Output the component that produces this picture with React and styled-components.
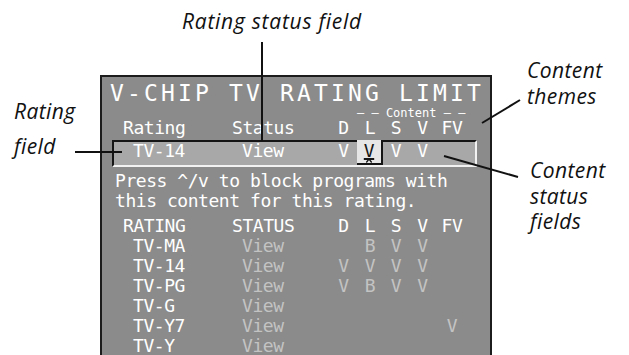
import React from 'react';
import styled, { createGlobalStyle } from 'styled-components';

const GlobalStyle = createGlobalStyle`
  html, body {
    margin: 0;
    padding: 0;
    background: #fff;
  }
  body {
    width: 629px;
    height: 355px;
    overflow: hidden;
  }
`;

const columns = '109px 98px 27px 26px 26px 27px 32px';

const upperRows = [
  { rating: 'TV-14', status: 'View', content: ['V', 'V', 'V', 'V', ''] },
];

const lowerRows = [
  { rating: 'TV-MA', content: ['', 'B', 'V', 'V', ''] },
  { rating: 'TV-14', content: ['V', 'V', 'V', 'V', ''] },
  { rating: 'TV-PG', content: ['V', 'B', 'V', 'V', ''] },
  { rating: 'TV-G', content: ['', '', '', '', ''] },
  { rating: 'TV-Y7', content: ['', '', '', '', 'V'] },
  { rating: 'TV-Y', content: ['', '', '', '', ''] },
];

const themes = ['D', 'L', 'S', 'V', 'FV'];

const App = () => {
  const selected = upperRows[0];
  return (
    <Figure>
      <GlobalStyle />
      <Screen>
        <Title>V-CHIP TV RATING LIMIT</Title>
        <ThemeCaption>
          <span>– – Content – –</span>
        </ThemeCaption>
        <Row>
          <Cell>Rating</Cell>
          <Cell>Status</Cell>
          {themes.map((t) => (
            <Cell key={t} center>
              {t}
            </Cell>
          ))}
        </Row>
        <SelectedRow>
          <Cell indent>{selected.rating}</Cell>
          <Cell indent>{selected.status}</Cell>
          {selected.content.map((c, i) =>
            i === 1 ? (
              <Cursor key={i}>
                <u>{c}</u>
                <Caret viewBox="0 0 7 5" width="7" height="5">
                  <polyline points="0.8,4.5 3.5,1 6.2,4.5" />
                </Caret>
              </Cursor>
            ) : (
              <Cell key={i} center>
                {c}
              </Cell>
            )
          )}
        </SelectedRow>
        <Message>
          Press ^/v to block programs with
          <br />
          this content for this rating.
        </Message>
        <Row $gap={5} $lh={20}>
          <Cell>RATING</Cell>
          <Cell>STATUS</Cell>
          {themes.map((t) => (
            <Cell key={t} center>
              {t}
            </Cell>
          ))}
        </Row>
        {lowerRows.map((r) => (
          <Row key={r.rating} $lh={20}>
            <Cell indent>{r.rating}</Cell>
            <Cell indent dim>
              View
            </Cell>
            {r.content.map((c, i) => (
              <Cell key={i} center dim>
                {c}
              </Cell>
            ))}
          </Row>
        ))}
      </Screen>

      <Callouts viewBox="0 0 629 355" width="629" height="355">
        <line x1="262" y1="42" x2="262" y2="141" />
        <line x1="75" y1="152" x2="122" y2="152" />
        <line x1="482" y1="123" x2="520" y2="100" />
        <line x1="444" y1="156" x2="518" y2="177" />
      </Callouts>

      <Label $ls={0.75} style={{ left: 182, top: 9 }}>
        Rating status field
      </Label>
      <Label $lh={35} style={{ left: 14, top: 94 }}>
        Rating
        <br />
        field
      </Label>
      <Label style={{ left: 527, top: 58 }}>
        Content
        <br />
        themes
      </Label>
      <Label style={{ left: 530, top: 158 }}>
        Content
        <br />
        status
        <br />
        fields
      </Label>
    </Figure>
  );
};

export default App;

const Figure = styled.div`
  position: relative;
  width: 629px;
  height: 355px;
  overflow: hidden;
  box-sizing: border-box;
  padding: 75px 0 0 100px;
`;

const Screen = styled.div`
  width: 392px;
  height: 300px;
  box-sizing: border-box;
  border: 2px solid #1c1c1c;
  background: #8b8b8b;
  padding: 0 13px 0 10px;
  font-family: 'DejaVu Sans Mono', monospace;
  font-size: 18px;
  letter-spacing: -0.45px;
  color: #fff;
`;

const Title = styled.div`
  margin-left: -2px;
  padding-top: 2px;
  font-size: 23px;
  line-height: 28px;
  letter-spacing: 3.15px;
  white-space: pre;
`;

const Row = styled.div`
  display: grid;
  grid-template-columns: ${columns};
  padding-left: 11px;
  margin-top: ${(p) => p.$gap || 0}px;
  line-height: ${(p) => p.$lh || 18}px;
  white-space: pre;
`;

const ThemeCaption = styled(Row)`
  font-size: 12px;
  line-height: 12px;
  letter-spacing: 0;

  span {
    grid-column: 4 / span 4;
  }
`;

const SelectedRow = styled(Row)`
  margin-top: 3px;
  padding-left: 9px;
  background: #a8a8a8;
  border-top: 2px solid #151515;
  border-left: 2px solid #151515;
  border-bottom: 2px solid #f2f2f2;
  border-right: 2px solid #f2f2f2;

  & > * {
    padding-bottom: 5px;
  }
`;

const Cell = styled.span`
  padding-left: ${(p) => (p.indent ? 10 : 0)}px;
  text-align: ${(p) => (p.center ? 'center' : 'left')};
  color: ${(p) => (p.dim ? '#c3c3c3' : '#fff')};
`;

const Cursor = styled.span`
  position: relative;
  margin-top: -2px;
  padding-top: 2px;
  box-sizing: border-box;
  text-align: center;
  background: #e6e6e6;
  color: #161616;
  border-right: 2px solid #151515;
  border-bottom: 2px solid #151515;
  padding-bottom: 3px !important;

  u {
    text-decoration-thickness: 1.5px;
    text-underline-offset: 1px;
  }
`;

const Caret = styled.svg`
  position: absolute;
  left: 50%;
  bottom: 0;
  transform: translateX(-50%);

  polyline {
    fill: none;
    stroke: #161616;
    stroke-width: 1.3;
  }
`;

const Message = styled.div`
  margin-top: 4px;
  padding-left: 3px;
  line-height: 20px;
  white-space: pre;
`;

const Callouts = styled.svg`
  position: absolute;
  left: 0;
  top: 0;
  pointer-events: none;

  line {
    stroke: #111;
    stroke-width: 2;
  }
`;

const Label = styled.div`
  position: absolute;
  font-family: 'Open Sans', 'DejaVu Sans', sans-serif;
  font-style: italic;
  font-size: 21px;
  letter-spacing: ${(p) => p.$ls ?? 0.4}px;
  line-height: ${(p) => p.$lh || 25.5}px;
  color: #111;
  white-space: nowrap;
`;
